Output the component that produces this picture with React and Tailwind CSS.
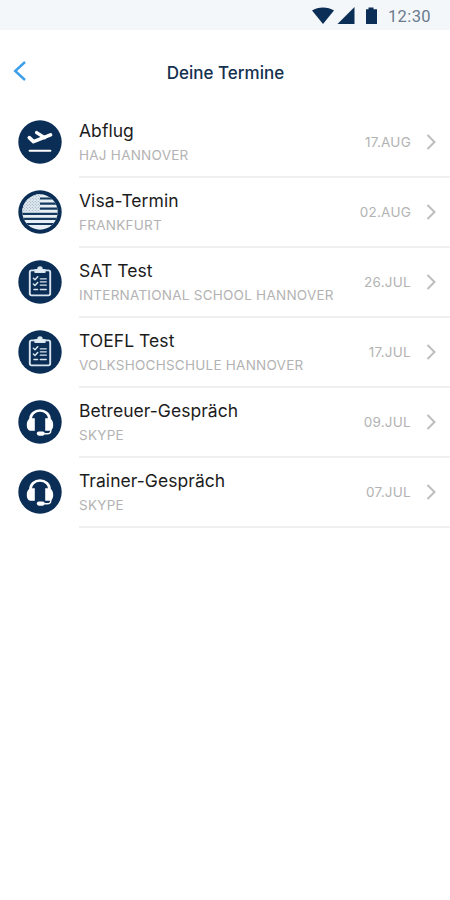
const NAVY = '#0b2e56';

function PlaneIcon() {
  return (
    <svg viewBox="0 0 44 44" className="size-11 shrink-0">
      <circle cx="22" cy="22" r="21.7" fill={NAVY} />
      <path d="M11.300 17.700l4.200 3.900L32.500 14.900" fill="none" stroke="#fff" strokeWidth="3.700" strokeLinecap="round" strokeLinejoin="round" />
      <path d="M18.600 12.600l8 5" fill="none" stroke="#fff" strokeWidth="3.400" strokeLinecap="round" />
      <path d="M11.600 30.700h20.800" stroke="#fff" strokeWidth="2" strokeLinecap="round" />
    </svg>
  );
}

function FlagIcon() {
  return (
    <svg viewBox="0 0 44 44" className="size-11 shrink-0">
      <defs>
        <clipPath id="flag"><circle cx="22" cy="22" r="17.700" /></clipPath>
        <pattern id="stars" width="3" height="3" patternUnits="userSpaceOnUse">
          <circle cx=".75" cy=".75" r=".55" fill="#7f98b0" />
          <circle cx="2.250" cy="2.250" r=".55" fill="#7f98b0" />
        </pattern>
      </defs>
      <circle cx="22" cy="22" r="21.700" fill={NAVY} />
      <g clipPath="url(#flag)">
        <rect width="44" height="44" fill="#e9f0f5" />
        <path d="M22 8.500h20M22 13.600h20M22 18.700h20M0 23.800h44M0 28.900h44M0 34h44" stroke="#143a5f" strokeWidth="2.200" />
        <rect width="22" height="21.500" fill="#e3ebf1" />
        <rect width="22" height="21.500" fill="url(#stars)" />
      </g>
    </svg>
  );
}

function ClipboardIcon() {
  return (
    <svg viewBox="0 0 44 44" className="size-11 shrink-0" fill="none" stroke="#d9e5ee" strokeLinecap="round" strokeLinejoin="round">
      <circle cx="22" cy="22" r="21.700" fill={NAVY} stroke="none" />
      <rect x="11.800" y="10.400" width="20.400" height="25" rx="1.800" strokeWidth="1.900" />
      <path d="M17 12.300V9.600h2.800a2.200 2.600 0 0 1 4.400 0H27v2.700z" fill="#e4edf4" strokeWidth="1.300" />
      <path d="M15.400 18.200l1.600 1.500 2.700-2.900M15.400 24l1.600 1.500 2.700-2.900M16 29.500h3.500" strokeWidth="1.500" />
      <path d="M22.300 18.800h6M22.300 21.800h6M22.300 25.200h6M22.300 29.500h6" strokeWidth="1.300" />
    </svg>
  );
}

function HeadsetIcon() {
  return (
    <svg viewBox="0 0 44 44" className="size-11 shrink-0">
      <circle cx="22" cy="22" r="21.700" fill={NAVY} />
      <path d="M12.500 20v-1a9.500 8.500 0 0 1 19 0v1" fill="none" stroke="#fff" strokeWidth="2.700" />
      <path d="M16.800 18.200v12.600h-3.600c-2.800 0-4.400-2.100-4.400-6.100s1.900-6.500 5-6.500zM27.200 18.200v12.600h3.600c2.800 0 4.400-2.100 4.400-6.100s-1.900-6.500-5-6.500z" fill="#fff" />
      <path d="M32.800 29v1.700c0 2-1.300 3-3.500 3h-3" fill="none" stroke="#fff" strokeWidth="1.400" />
      <rect x="18.800" y="31.500" width="8" height="4.200" rx="2.100" fill="#fff" />
    </svg>
  );
}

const APPOINTMENTS = [
  { title: 'Abflug', place: 'HAJ HANNOVER', date: '17.AUG', Icon: PlaneIcon },
  { title: 'Visa-Termin', place: 'FRANKFURT', date: '02.AUG', Icon: FlagIcon },
  { title: 'SAT Test', place: 'INTERNATIONAL SCHOOL HANNOVER', date: '26.JUL', Icon: ClipboardIcon },
  { title: 'TOEFL Test', place: 'VOLKSHOCHSCHULE HANNOVER', date: '17.JUL', Icon: ClipboardIcon },
  { title: 'Betreuer-Gespräch', place: 'SKYPE', date: '09.JUL', Icon: HeadsetIcon },
  { title: 'Trainer-Gespräch', place: 'SKYPE', date: '07.JUL', Icon: HeadsetIcon },
];

function StatusBar() {
  return (
    <div className="flex h-[30px] items-center justify-end bg-[#f4f7f9] pr-[19px] pt-1">
      <svg width="67" height="18" viewBox="0 0 67 18" fill="#0b2e56" className="-mt-0.5">
        <path d="M0 3.500C6-.6 16-.6 22 3.500L11 17z" />
        <path d="M42.500 0v17h-17z" />
        <path d="M54 2.300h2.500V.5h5v1.800H65V17H54z" />
      </svg>
      <span className="ml-[9px] text-[16.500px] leading-5 text-[#6b7b8d] font-['Roboto',sans-serif] tracking-[0.4px]">12:30</span>
    </div>
  );
}

function Header() {
  return (
    <header className="grid h-[78px] grid-cols-[1fr_auto_1fr] items-center px-[13px] pt-[7px]">
      <svg width="13" height="20" viewBox="0 0 13 20" fill="none" stroke="#3d9eea" strokeWidth="2.400" className="-mt-[3px]">
        <path d="M12 1L2.200 10 12 19" />
      </svg>
      <h1 className="pl-px text-[17px] font-medium leading-6 text-[#14304f]">Deine Termine</h1>
      <span />
    </header>
  );
}

function AppointmentRow({ title, place, date, Icon }) {
  return (
    <li className="flex h-[70px] pl-[18px]">
      <div className="flex h-[68px] items-center">
        <Icon />
      </div>
      <div className="ml-[17px] flex flex-1 items-center border-b-2 border-[#f0f0f0] pr-[14px]">
        <div className="flex-1 pb-px">
          <div className="text-[17.500px] leading-6 tracking-[0.05px] text-[#1c1c1c]">{title}</div>
          <div className="mt-0.5 text-[13.500px] leading-5 tracking-[0.25px] text-[#b3b3b3]">{place}</div>
        </div>
        <span className="text-[13.500px] leading-5 tracking-[0.25px] text-[#b3b3b3]">{date}</span>
        <svg width="10" height="16" viewBox="0 0 10 16" fill="none" stroke="#bdbdbd" strokeWidth="2" className="ml-[15px]">
          <path d="M1.500 1L8.500 8 1.500 15" />
        </svg>
      </div>
    </li>
  );
}

export default function App() {
  return (
    <main className="h-[900px] w-[450px] overflow-hidden bg-white font-['Inter','Liberation_Sans',sans-serif]">
      <StatusBar />
      <Header />
      <ul>
        {APPOINTMENTS.map((item) => (
          <AppointmentRow key={item.title} {...item} />
        ))}
      </ul>
    </main>
  );
}
